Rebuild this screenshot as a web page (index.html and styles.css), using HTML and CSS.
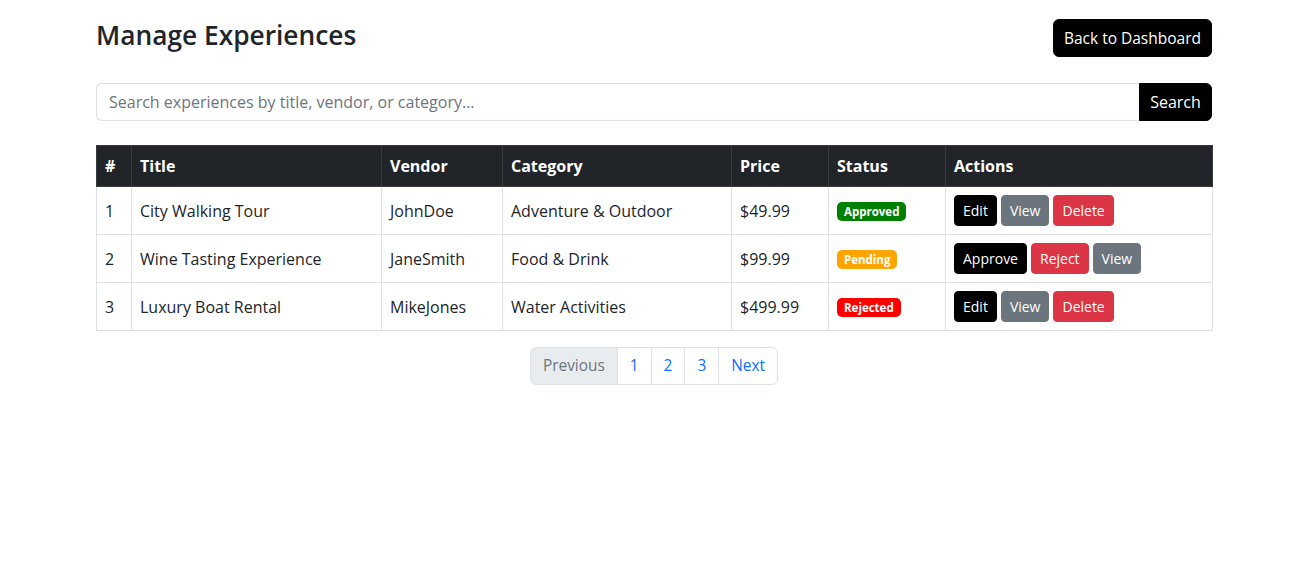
FILE: index.html
```html
<!DOCTYPE html>
<html lang="en">
<head>
<meta charset="utf-8">
<title>Manage Experiences</title>
<link rel="stylesheet" href="styles.css">
</head>
<body>
<div class="container">
  <div class="page-head">
    <h2 class="title">Manage Experiences</h2>
    <a class="btn btn-dark" href="#">Back to Dashboard</a>
  </div>

  <form class="input-group">
    <input class="form-control" type="text" placeholder="Search experiences by title, vendor, or category...">
    <button class="btn btn-dark btn-search" type="button">Search</button>
  </form>

  <table class="table">
    <colgroup>
      <col class="c-num"><col class="c-title"><col class="c-vendor"><col class="c-cat"><col class="c-price"><col class="c-status"><col class="c-actions">
    </colgroup>
    <thead>
      <tr><th>#</th><th>Title</th><th>Vendor</th><th>Category</th><th>Price</th><th>Status</th><th>Actions</th></tr>
    </thead>
    <tbody>
      <tr>
        <td class="num">1</td><td>City Walking Tour</td><td>JohnDoe</td><td>Adventure &amp; Outdoor</td><td>$49.99</td>
        <td><span class="badge badge-approved">Approved</span></td>
        <td class="actions"><button class="btn btn-sm btn-dark">Edit</button><button class="btn btn-sm btn-secondary">View</button><button class="btn btn-sm btn-danger">Delete</button></td>
      </tr>
      <tr>
        <td class="num">2</td><td>Wine Tasting Experience</td><td>JaneSmith</td><td>Food &amp; Drink</td><td>$99.99</td>
        <td><span class="badge badge-pending">Pending</span></td>
        <td class="actions"><button class="btn btn-sm btn-dark">Approve</button><button class="btn btn-sm btn-danger">Reject</button><button class="btn btn-sm btn-secondary">View</button></td>
      </tr>
      <tr>
        <td class="num">3</td><td>Luxury Boat Rental</td><td>MikeJones</td><td>Water Activities</td><td>$499.99</td>
        <td><span class="badge badge-rejected">Rejected</span></td>
        <td class="actions"><button class="btn btn-sm btn-dark">Edit</button><button class="btn btn-sm btn-secondary">View</button><button class="btn btn-sm btn-danger">Delete</button></td>
      </tr>
    </tbody>
  </table>

  <nav class="pager">
    <ul class="pagination">
      <li class="page-item disabled"><span class="page-link">Previous</span></li>
      <li class="page-item"><a class="page-link" href="#">1</a></li>
      <li class="page-item"><a class="page-link" href="#">2</a></li>
      <li class="page-item"><a class="page-link" href="#">3</a></li>
      <li class="page-item"><a class="page-link" href="#">Next</a></li>
    </ul>
  </nav>
</div>
</body>
</html>
```

FILE: styles.css
```css
* { box-sizing: border-box; }

body {
  margin: 0;
  font-family: "Open Sans", "Noto Sans", "Liberation Sans", sans-serif;
  font-size: 16px;
  line-height: 1.5;
  color: #212529;
  background: #fff;
}

.container {
  width: 1116px;
  margin: 0 0 0 calc((100% - 1116px) / 2 - 1.5px);
  padding-top: 19px;
}

.page-head {
  display: flex;
  justify-content: space-between;
  align-items: center;
  margin-bottom: 26px;
}

.title {
  margin: 0 0 4px 0;
  font-size: 26.3px;
  font-weight: 600;
  line-height: 1.2;
}

.btn {
  display: inline-block;
  font-family: inherit;
  font-size: 16px;
  line-height: 24px;
  padding: 6px 12px;
  border: 1px solid transparent;
  border-radius: 6px;
  text-decoration: none;
  cursor: pointer;
  color: #fff;
}

.page-head .btn { padding: 6px 10px; font-size: 15.5px; }

.btn-dark { background: #000; border-color: #000; }
.btn-secondary { background: #6c757d; border-color: #6c757d; }
.btn-danger { background: #dc3545; border-color: #dc3545; }

.btn-sm {
  font-size: 14px;
  line-height: 21px;
  padding: 4px 8px;
  border-radius: 4px;
}

.input-group {
  display: flex;
  margin: 0 0 24px 0;
}

.form-control {
  flex: 1;
  min-width: 0;
  font-family: inherit;
  font-size: 16px;
  line-height: 24px;
  padding: 6px 12px;
  border: 1px solid #dee2e6;
  border-right: 0;
  border-radius: 6px 0 0 6px;
  color: #212529;
  outline: none;
}

.form-control::placeholder { color: #6c757d; }

.btn-search {
  border-radius: 0 6px 6px 0;
  width: 73px;
  padding: 6px 0;
  text-align: center;
}

.table {
  width: 1116px;
  table-layout: fixed;
  border-collapse: collapse;
  margin-bottom: 16px;
}

.c-num { width: 35px; }
.c-title { width: 250px; }
.c-vendor { width: 121px; }
.c-cat { width: 229px; }
.c-price { width: 97px; }
.c-status { width: 117px; }
.c-actions { width: 267px; }

.table th,
.table td {
  padding: 8px;
  text-align: left;
  vertical-align: middle;
  white-space: nowrap;
}

.table thead th {
  background: #212529;
  color: #fff;
  font-weight: 700;
  border: 1px solid #373b3e;
  height: 41px;
  padding-top: 7px;
  padding-bottom: 7px;
}

.table tbody td {
  border: 1px solid #dee2e6;
  height: 48px;
}

.actions .btn + .btn { margin-left: 4px; }

.badge {
  display: inline-block;
  font-size: 11.5px;
  font-weight: 700;
  line-height: 1;
  color: #fff;
  padding: 4px 7px;
  border-radius: 5px;
  vertical-align: 1px;
}

.badge-approved { background: #008000; }
.badge-pending { background: #ffa500; }
.badge-rejected { background: #ff0000; }

.pager {
  display: flex;
  justify-content: center;
}

.pagination {
  display: flex;
  list-style: none;
  margin: 0;
  padding: 0;
}

.page-link {
  display: block;
  padding: 6px 12px;
  line-height: 24px;
  font-size: 15.4px;
  color: #0d6efd;
  text-decoration: none;
  background: #fff;
  border: 1px solid #dee2e6;
  margin-left: -1px;
}

.page-item:first-child .page-link {
  margin-left: 0;
  border-radius: 6px 0 0 6px;
}

.page-item:last-child .page-link {
  border-radius: 0 6px 6px 0;
}

.page-item.disabled .page-link {
  color: #6c757d;
  background: #e9ecef;
}
```
